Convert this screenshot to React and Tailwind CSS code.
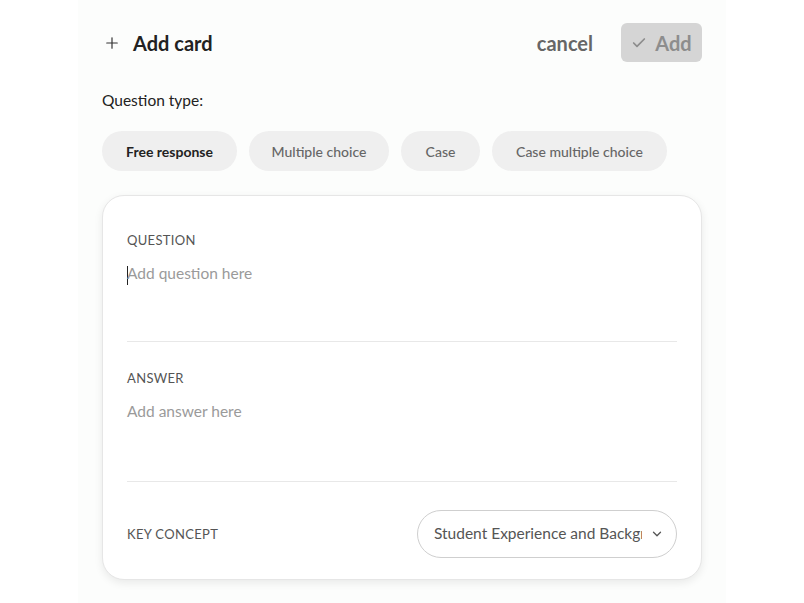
import { Plus, Check, ChevronDown } from "lucide-react";

const types = [
  { label: "Free response", active: true, w: "w-[135px]" },
  { label: "Multiple choice", w: "w-[140px]" },
  { label: "Case", w: "w-[79px]" },
  { label: "Case multiple choice", w: "w-[175px]" },
];

export default function App() {
  return (
    <div className="min-h-screen bg-white flex justify-center font-['Lato',sans-serif]">
      <div className="w-[648px] min-h-screen bg-[#fcfdfc] px-6 pt-[23px]">
        {/* header */}
        <div className="flex items-center justify-between h-[39px]">
          <div className="flex items-center">
            <Plus className="w-[18px] h-[18px] ml-[1px] text-[#333]" strokeWidth={1.6} />
            <span className="ml-[12px] text-[20px] font-bold text-[#222]">Add card</span>
          </div>
          <div className="flex items-center">
            <button className="text-[20px] font-bold text-[#666] mr-[28px]">cancel</button>
            <button className="h-[39px] w-[81px] rounded-md bg-[#d5d5d5] flex items-center justify-center gap-2 text-[20px] font-bold text-[#8d8d8d]">
              <Check className="w-[16px] h-[16px]" strokeWidth={2.6} />
              Add
            </button>
          </div>
        </div>

        <p className="mt-[28px] text-[15.5px] leading-5 text-[#222]">Question type:</p>

        <div className="mt-[21px] flex gap-3">
          {types.map((t) => (
            <button
              key={t.label}
              className={`h-10 ${t.w} rounded-full bg-[#efefef] text-[14px] ${
                t.active ? "text-[#222] font-bold" : "text-[#666] font-medium"
              }`}
            >
              {t.label}
            </button>
          ))}
        </div>

        {/* card */}
        <div className="mt-6 bg-white border border-[#e6e6e6] rounded-[22px] shadow-[0_3px_8px_rgba(0,0,0,0.08)] px-6">
          <div className="pt-[36px] border-b border-[#e8e8e8]">
            <p className="text-[13px] leading-4 text-[#555] tracking-wide">QUESTION</p>
            <div className="mt-[15px] h-[78px] text-[15.5px] leading-5 text-[#9a9a9a]">
              <span className="inline-block w-px h-[19px] bg-[#222] align-middle -mr-px" />
              Add question here
            </div>
          </div>
          <div className="pt-[28px] border-b border-[#e8e8e8]">
            <p className="text-[13px] leading-4 text-[#555] tracking-wide">ANSWER</p>
            <div className="mt-[15px] h-[80px] text-[15.5px] leading-5 text-[#9a9a9a]">Add answer here</div>
          </div>
          <div className="pt-[28px] pb-[21px] flex items-center justify-between">
            <p className="text-[13px] leading-4 text-[#555] tracking-wide">KEY CONCEPT</p>
            <div className="h-12 w-[260px] rounded-full border border-[#cfcfcf] flex items-center pl-4 pr-3">
              <span className="flex-1 overflow-hidden whitespace-nowrap text-[15.5px] text-[#555]">
                Student Experience and Background
              </span>
              <ChevronDown className="ml-2 w-[14px] h-[14px] text-[#555]" strokeWidth={2.2} />
            </div>
          </div>
        </div>
      </div>
    </div>
  );
}
